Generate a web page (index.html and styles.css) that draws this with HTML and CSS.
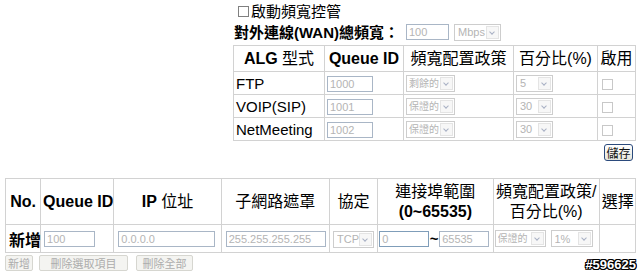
FILE: index.html
```html
<!DOCTYPE html>
<html lang="zh-Hant">
<head>
    <meta charset="UTF-8">
    <title>頻寬控管</title>
    <link rel="stylesheet" href="styles.css">
</head>
<body>
    <div class="page">
        <div class="bw">
            <div class="bw-enable"><span class="box"></span>啟動頻寬控管</div>
            <div class="bw-wan">
                對外連線(WAN)總頻寬：
                <input class="txt txt-wan" type="text" value="100" disabled>
                <span class="sel sel-unit"><select disabled><option>Mbps</option></select></span>
            </div>

            <table class="grid alg">
                <colgroup>
                    <col style="width:91px"><col style="width:79px"><col style="width:110px"><col style="width:84px"><col style="width:38px">
                </colgroup>
                <tr>
                    <th><b>ALG</b> 型式</th>
                    <th><b>Queue ID</b></th>
                    <th>頻寬配置政策</th>
                    <th>百分比(%)</th>
                    <th>啟用</th>
                </tr>
                <tr>
                    <td>FTP</td>
                    <td><input class="txt txt-q" type="text" value="1000" disabled></td>
                    <td><span class="sel sel-pol"><select disabled><option>剩餘的</option></select></span></td>
                    <td><span class="sel sel-pct"><select disabled><option>5</option></select></span></td>
                    <td><input class="chk" type="checkbox" disabled></td>
                </tr>
                <tr>
                    <td>VOIP(SIP)</td>
                    <td><input class="txt txt-q" type="text" value="1001" disabled></td>
                    <td><span class="sel sel-pol"><select disabled><option>保證的</option></select></span></td>
                    <td><span class="sel sel-pct"><select disabled><option>30</option></select></span></td>
                    <td><input class="chk" type="checkbox" disabled></td>
                </tr>
                <tr>
                    <td>NetMeeting</td>
                    <td><input class="txt txt-q" type="text" value="1002" disabled></td>
                    <td><span class="sel sel-pol"><select disabled><option>保證的</option></select></span></td>
                    <td><span class="sel sel-pct"><select disabled><option>30</option></select></span></td>
                    <td><input class="chk" type="checkbox" disabled></td>
                </tr>
            </table>

            <div class="save-row"><button class="btn-save">儲存</button></div>
        </div>

        <table class="grid rules">
            <colgroup>
                <col style="width:35px"><col style="width:73px"><col style="width:107px"><col style="width:108px"><col style="width:48px"><col style="width:115px"><col style="width:106px"><col style="width:36px">
            </colgroup>
            <tr>
                <th><b>No.</b></th>
                <th><b>Queue ID</b></th>
                <th><b>IP</b> 位址</th>
                <th>子網路遮罩</th>
                <th>協定</th>
                <th>連接埠範圍<br><b>(0~65535)</b></th>
                <th>頻寬配置政策/<br>百分比(%)</th>
                <th>選擇</th>
            </tr>
            <tr>
                <td class="add">新增</td>
                <td><input class="txt txt-id" type="text" value="100" disabled></td>
                <td class="pad4"><input class="txt txt-ip" type="text" value="0.0.0.0" disabled></td>
                <td class="pad4"><input class="txt txt-mask" type="text" value="255.255.255.255" disabled></td>
                <td><span class="sel sel-proto"><select disabled><option>TCP</option></select></span></td>
                <td class="pad1">
                    <div class="range">
                        <input class="txt txt-port txt-on" type="text" value="0" disabled><b class="tilde">~</b><input class="txt txt-port" type="text" value="65535" disabled>
                    </div>
                </td>
                <td class="pad1">
                    <div class="range">
                        <span class="sel sel-pol2"><select disabled><option>保證的</option></select></span>
                        <span class="sel sel-pct2"><select disabled><option>1%</option></select></span>
                    </div>
                </td>
                <td></td>
            </tr>
        </table>

        <div class="rule-actions">
            <button class="btn-off btn-add" disabled>新增</button>
            <button class="btn-off btn-del" disabled>刪除選取項目</button>
            <button class="btn-off btn-all" disabled>刪除全部</button>
        </div>

        <div class="stamp">#596625</div>
    </div>
</body>
</html>
```

FILE: styles.css
```css
body {
    margin: 0;
    font-family: "Liberation Sans", "Noto Sans CJK TC", sans-serif;
    color: #000;
    background: #fff;
}

.page {
    position: relative;
    width: 640px;
    height: 276px;
}

/* bandwidth block */
.bw {
    margin-left: 233px;
    width: 402px;
}

.bw-enable {
    display: flex;
    align-items: center;
    height: 22px;
    padding-left: 5px;
    font-size: 15px;
    line-height: 1;
}

.box {
    width: 9px;
    height: 9px;
    border: 1px solid #808080;
    margin-right: 2px;
}

.bw-wan {
    display: flex;
    align-items: center;
    height: 20px;
    padding-left: 1px;
    font-size: 15px;
    font-weight: bold;
    line-height: 1;
    white-space: nowrap;
}

.txt-wan {
    width: 43px;
    margin-left: 7px;
}

.sel-unit {
    margin-left: 5px;
}

.sel-unit select {
    width: 47px;
}

/* tables */
.grid {
    border-collapse: collapse;
    table-layout: fixed;
}

.grid th,
.grid td {
    border: 1px solid #d2d2d2;
    padding: 0 2px;
    white-space: nowrap;
}

.grid th {
    font-size: 16px;
    font-weight: normal;
    line-height: 20px;
    text-align: center;
    vertical-align: middle;
}

.alg {
    width: 402px;
    margin-top: 3px;
}

.alg th {
    height: 25px;
}

.alg td {
    height: 22px;
    font-size: 15px;
    line-height: 1;
}

.save-row {
    display: flex;
    justify-content: flex-end;
    padding-right: 2px;
    margin-top: 3px;
}

.btn-save {
    width: 29px;
    height: 17px;
    padding: 0;
    font-family: "Noto Sans CJK TC", sans-serif;
    font-size: 12px;
    line-height: 1;
    color: #111;
    border: 1px solid #2b4a7c;
    border-radius: 3px;
    background: linear-gradient(#ffffff, #e6e5dc);
}

.rules {
    width: 631px;
    margin: 17px 0 0 5px;
}

.rules th {
    height: 45px;
}

.rules td {
    height: 27px;
    padding-left: 3px;
}

.rules td.pad4 {
    padding-left: 4px;
}

.rules td.pad1 {
    padding-left: 1px;
}

.add {
    font-size: 16px;
    font-weight: bold;
    font-family: "Noto Sans CJK TC", sans-serif;
    line-height: 1;
}

.range {
    display: flex;
    align-items: center;
}

.tilde {
    width: 10px;
    font-size: 15px;
    text-align: center;
}

/* form controls */
.txt {
    box-sizing: border-box;
    height: 16px;
    padding: 0 2px;
    border: 1px solid #a9b6c6;
    background: #fff;
    color: #b4b4b4;
    font-family: "Liberation Sans", sans-serif;
    font-size: 11px;
    vertical-align: middle;
}

.txt-on {
    border-color: #7f9db9;
}

.txt-q { width: 46px; }
.txt-id { width: 51px; }
.txt-ip { width: 97px; }
.txt-mask { width: 100px; }
.txt-port { width: 50px; }

.sel {
    position: relative;
    display: inline-block;
    vertical-align: middle;
    line-height: 0;
}

.sel select {
    -webkit-appearance: none;
    appearance: none;
    box-sizing: border-box;
    height: 17px;
    padding: 0 0 0 3px;
    border: 1px solid #cdcdcd;
    border-radius: 0;
    background: #fff;
    color: #b4b4b4;
    font-family: "Liberation Sans", "Noto Sans CJK TC", sans-serif;
    font-size: 11px;
    opacity: 1;
}

.sel::after {
    content: "";
    position: absolute;
    top: 2px;
    right: 2px;
    width: 13px;
    height: 13px;
    box-sizing: border-box;
    border: 1px solid #e4e4e4;
    background: #f7f7f7;
}

.sel::before {
    content: "";
    position: absolute;
    z-index: 1;
    top: 6px;
    right: 7px;
    width: 3px;
    height: 3px;
    border-right: 1px solid #a8b0c4;
    border-bottom: 1px solid #a8b0c4;
    transform: rotate(45deg);
}

.sel-pol select,
.sel-pol2 select {
    padding-left: 2px;
    font-size: 10px;
}

.sel-pol select { width: 49px; }
.sel-pct select { width: 37px; }
.sel-proto select { width: 41px; }
.sel-pol2 select { width: 51px; }
.sel-pct2 { margin-left: 5px; }
.sel-pct2 select { width: 42px; }

.chk {
    -webkit-appearance: none;
    appearance: none;
    width: 11px;
    height: 11px;
    margin: 0 0 0 2px;
    border: 1px solid #c8c8c8;
    background: #fff;
    vertical-align: middle;
}

/* rule buttons */
.rule-actions {
    display: flex;
    margin: 2px 0 0 5px;
}

.btn-off {
    height: 16px;
    padding: 0;
    font-family: "Noto Sans CJK TC", sans-serif;
    font-size: 11px;
    line-height: 1;
    color: #acacac;
    border: 1px solid #d6d6d0;
    border-radius: 2px;
    background: #f4f4f1;
}

.btn-add { width: 28px; }
.btn-del { width: 89px; margin-left: 6px; }
.btn-all { width: 57px; margin-left: 8px; }

.stamp {
    position: absolute;
    right: 4px;
    bottom: 4px;
    font-family: "Liberation Sans", sans-serif;
    font-size: 13px;
    font-weight: bold;
    color: #fff;
    text-shadow: -1px 0 #000, 1px 0 #000, 0 -1px #000, 0 1px #000,
                 -1px -1px #000, 1px 1px #000, -1px 1px #000, 1px -1px #000;
}
```
